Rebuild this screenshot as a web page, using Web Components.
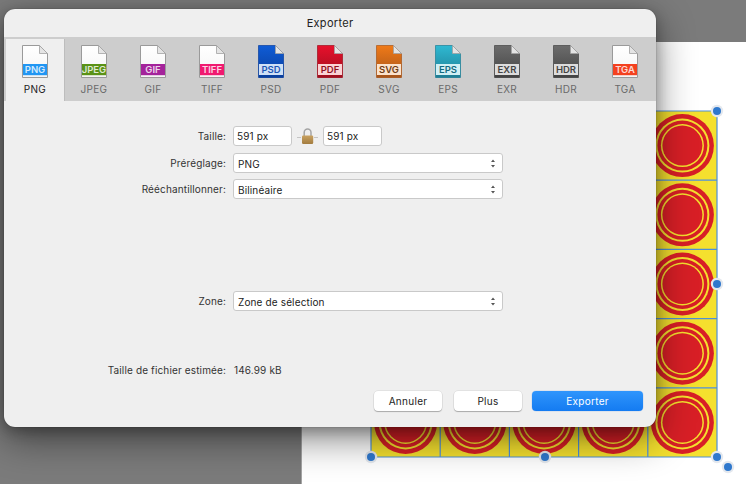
<!DOCTYPE html>
<html lang="fr"><head><meta charset="utf-8"><title>Exporter</title>
<style>
html,body{margin:0;padding:0;width:746px;height:484px;overflow:hidden;background:#7b7b7b}
body{font-family:Inter,"Liberation Sans",sans-serif}
</style></head><body>
<export-stage>
  <artboard-canvas></artboard-canvas>
  <export-dialog title-text="Exporter">
    <format-tab slot="tabs" active label="PNG" color="#2196f3"></format-tab>
    <format-tab slot="tabs" label="JPEG" color="#5a9216"></format-tab>
    <format-tab slot="tabs" label="GIF" color="#a4239b"></format-tab>
    <format-tab slot="tabs" label="TIFF" color="#f01a70"></format-tab>
    <format-tab slot="tabs" label="PSD" color="#0f5cd6" dark="#0a3f9e" ink="#1c55b4" tint="#cfe0f6"></format-tab>
    <format-tab slot="tabs" label="PDF" color="#e8102c" dark="#a00f1e" ink="#90111f" tint="#fbd3d5"></format-tab>
    <format-tab slot="tabs" label="SVG" color="#f07a18" dark="#a8551a" ink="#6e3a12" tint="#fbe2cc"></format-tab>
    <format-tab slot="tabs" label="EPS" color="#2fb9d2" dark="#1e7f96" ink="#116a80" tint="#d0eff4"></format-tab>
    <format-tab slot="tabs" label="EXR" color="#6c6c6c" dark="#444" ink="#444" tint="#dcdcdc"></format-tab>
    <format-tab slot="tabs" label="HDR" color="#6c6c6c" dark="#444" ink="#444" tint="#dcdcdc"></format-tab>
    <format-tab slot="tabs" label="TGA" color="#f4411f"></format-tab>

    <form-row label="Taille:" style="margin-top:25px">
      <text-field value="591 px"></text-field>
      <lock-link></lock-link>
      <text-field value="591 px"></text-field>
    </form-row>
    <form-row label="Préréglage:" style="margin-top:7px"><select-field value="PNG"></select-field></form-row>
    <form-row label="Rééchantillonner:" style="margin-top:6px"><select-field value="Bilinéaire"></select-field></form-row>
    <form-row label="Zone:" style="margin-top:92px"><select-field value="Zone de sélection"></select-field></form-row>
    <form-row label="Taille de fichier estimée:" style="margin-top:52px;height:14px"><span style="font-size:10px;letter-spacing:.14px;color:#333;margin-left:1px">146.99 kB</span></form-row>

    <dialog-button slot="actions" style="width:68px">Annuler</dialog-button>
    <dialog-button slot="actions" style="width:68px;margin-left:12px">Plus</dialog-button>
    <dialog-button slot="actions" primary style="width:111px;margin-left:10px">Exporter</dialog-button>
  </export-dialog>
</export-stage>
<script>
const def=(n,c)=>customElements.define(n,c);
class Base extends HTMLElement{
  render(h){ if(!this.shadowRoot) this.attachShadow({mode:'open'}); this.shadowRoot.innerHTML=h; }
}
def('export-stage',class extends Base{connectedCallback(){this.render(`<style>
:host{display:block;position:relative;width:746px;height:484px;overflow:hidden;background:#7b7b7b}
</style><slot></slot>`)}});

def('artboard-canvas',class extends Base{connectedCallback(){
  const x0=371,y0=111,s=69.2,c=[];
  for(let r=0;r<5;r++)for(let k=0;k<5;k++){
    const x=x0+k*s,y=y0+r*s,cx=x+s/2,cy=y+s/2;
    c.push(`<rect x="${x}" y="${y}" width="${s}" height="${s}" fill="#f5e02e"/>
    <circle cx="${cx}" cy="${cy}" r="31.5" fill="#d81f26"/><circle cx="${cx}" cy="${cy}" r="27" fill="#f5e02e"/>
    <circle cx="${cx}" cy="${cy}" r="25" fill="#d81f26"/><circle cx="${cx}" cy="${cy}" r="21.5" fill="#f5e02e"/>
    <circle cx="${cx}" cy="${cy}" r="20" fill="#d81f26"/>`);
  }
  for(let i=0;i<=5;i++){const p=i*s;
    c.push(`<path d="M${x0+p} ${y0}V${y0+346}M${x0} ${y0+p}H${x0+346}" stroke="#4f8fd6" stroke-width="1.2" fill="none"/>`);
  }
  const h=[[371,457],[545,457],[717,457],[717,284],[717,111],[728,467]].map(([x,y])=>
    `<circle cx="${x}" cy="${y}" r="6.2" fill="#e4e8ee"/><circle cx="${x}" cy="${y}" r="4" fill="#2f78cd"/>`).join('');
  this.render(`<style>
  :host{display:block;position:absolute;left:301px;top:42px;width:445px;height:442px;background:#fff;border-left:1px solid #a5a5a5;box-sizing:border-box}
  svg{position:absolute;left:-302px;top:-42px}
  </style><svg width="746" height="484" viewBox="0 0 746 484">${c.join('')}${h}</svg>`);
}});

def('export-dialog',class extends Base{connectedCallback(){this.render(`<style>
:host{display:flex;flex-direction:column;position:absolute;left:4px;top:9px;width:652px;height:418px;background:#efefef;border-radius:11px;
  box-shadow:0 0 1px rgba(0,0,0,.6),0 4px 14px rgba(0,0,0,.26),0 12px 38px rgba(0,0,0,.48);overflow:hidden;color:#222;font-family:Inter,"Liberation Sans",sans-serif}
.title{height:28px;flex:none;display:flex;align-items:center;justify-content:center;font-size:11px;letter-spacing:.3px;color:#222}
.tabs{height:64px;flex:none;box-sizing:border-box;padding:2px 0 0 2px;background:#cdcdcd;display:flex}
.actions{display:flex;justify-content:flex-end;padding-right:13px;margin-top:14px}
</style><div class="title">${this.getAttribute('title-text')}</div>
<div class="tabs"><slot name="tabs"></slot></div>
<slot></slot>
<div class="actions"><slot name="actions"></slot></div>`)}});

def('format-tab',class extends Base{connectedCallback(){
  const a=this.hasAttribute('active'),l=this.getAttribute('label'),col=this.getAttribute('color'),
    dark=this.getAttribute('dark'),ink=this.getAttribute('ink'),tint=this.getAttribute('tint');
  const id='g'+l;
  const page='M.5 .5H17.5L25.5 8.5V32.5H.5Z';
  const body=dark
   ?`<defs><linearGradient id="${id}" x1="0" y1="0" x2="0" y2="1"><stop offset="0" stop-color="${col}"/><stop offset="1" stop-color="${dark}"/></linearGradient></defs>
     <path d="${page}" fill="url(#${id})" stroke="${dark}" stroke-opacity=".7"/>
     <rect x="1" y="19" width="24" height="11" fill="${tint}"/>
     <rect x="1" y="30" width="24" height="2.5" fill="${dark}"/>
     <text x="13" y="28" fill="${ink}">${l}</text>`
   :`<defs><linearGradient id="${id}" x1="0" y1="0" x2="0" y2="1"><stop offset="0" stop-color="#fff"/><stop offset="1" stop-color="#f4f4f4"/></linearGradient></defs>
     <path d="${page}" fill="url(#${id})" stroke="#9a9a9a"/>
     <rect x="1" y="19" width="24" height="11.2" fill="${col}"/>
     <text x="13" y="28" fill="#fff" fill-opacity=".82">${l}</text>`;
  this.render(`<style>
  :host{display:flex;flex-direction:column;align-items:center;box-sizing:border-box;flex:none;width:59px;height:62px;padding:6px 1px 0 0;
    ${a?'background:#efefef;border-right:1px solid #bdbdbd;padding-right:0;':''}}
  svg{display:block;width:26px;height:33px}
  text{font:600 9.5px Inter,"Liberation Sans",sans-serif;text-anchor:middle}
  .l{font-size:10px;letter-spacing:.3px;line-height:12px;margin-top:5px;color:${a?'#1c1c1c':'#6a6a6a'}}
  </style><svg viewBox="0 0 26 33">${body}
  <path d="M17.5 .5L25.5 8.5H17.5Z" fill="#e4e4e4" stroke="#a2a2a2" stroke-width=".8"/></svg><div class="l">${l}</div>`);
}});

def('form-row',class extends Base{connectedCallback(){this.render(`<style>
:host{display:grid;grid-template-columns:222px 270px;column-gap:7px;height:20px;align-items:center;flex:none}
.lab{text-align:right;font-size:10px;letter-spacing:.14px;color:#333;white-space:nowrap}
.c{display:flex;align-items:center}
</style><div class="lab">${this.getAttribute('label')}</div><div class="c"><slot></slot></div>`)}});

def('text-field',class extends Base{connectedCallback(){this.render(`<style>
:host{display:flex;align-items:center;box-sizing:border-box;width:59px;height:20px;padding-left:3px;background:#fff;border:1px solid #c9c9c9;border-radius:3px;font-size:10px;letter-spacing:.14px;color:#222}
</style>${this.getAttribute('value')}`)}});

def('lock-link',class extends Base{connectedCallback(){this.render(`<style>
:host{display:block;width:31px;height:20px;flex:none}svg{display:block}
</style><svg width="31" height="20" viewBox="0 0 31 20">
<defs><linearGradient id="b" x1="0" y1="0" x2="0" y2="1"><stop offset="0" stop-color="#c9a261"/><stop offset="1" stop-color="#a37c3f"/></linearGradient></defs>
<path d="M5 11.5H9M22 11.5H26" stroke="#c4c4c4" stroke-width="1"/>
<path d="M12.2 10V6.5a3.4 3.4 0 0 1 6.8 0V10" fill="none" stroke="#a5a5a5" stroke-width="1.5"/>
<rect x="10" y="9.5" width="11.2" height="8.5" rx="1.2" fill="url(#b)"/></svg>`)}});

def('select-field',class extends Base{connectedCallback(){this.render(`<style>
:host{display:flex;align-items:center;justify-content:space-between;box-sizing:border-box;width:270px;height:20px;padding:0 6px 0 4px;background:#fff;border:1px solid #c9c9c9;border-radius:3px;font-size:10px;letter-spacing:.14px;color:#222}
span{padding-top:1px}
svg{display:block}
</style><span>${this.getAttribute('value')}</span><svg width="6" height="11" viewBox="0 0 6 11"><path d="M3 1.5L5 4H1ZM3 9.5L1 7H5Z" fill="#555"/></svg>`)}});

def('dialog-button',class extends Base{connectedCallback(){this.render(`<style>
:host{display:flex;align-items:center;justify-content:center;box-sizing:border-box;height:20px;border-radius:4px;font-size:10px;letter-spacing:.3px;flex:none;
 background:#fff;color:#222;box-shadow:0 0 0 .5px rgba(0,0,0,.1),0 1px 1px rgba(0,0,0,.25)}
:host([primary]){background:linear-gradient(#2f95fc,#147bf1);color:#fff;box-shadow:0 0 0 .5px rgba(0,80,200,.15)}
</style><slot></slot>`)}});
</script>
</body></html>
